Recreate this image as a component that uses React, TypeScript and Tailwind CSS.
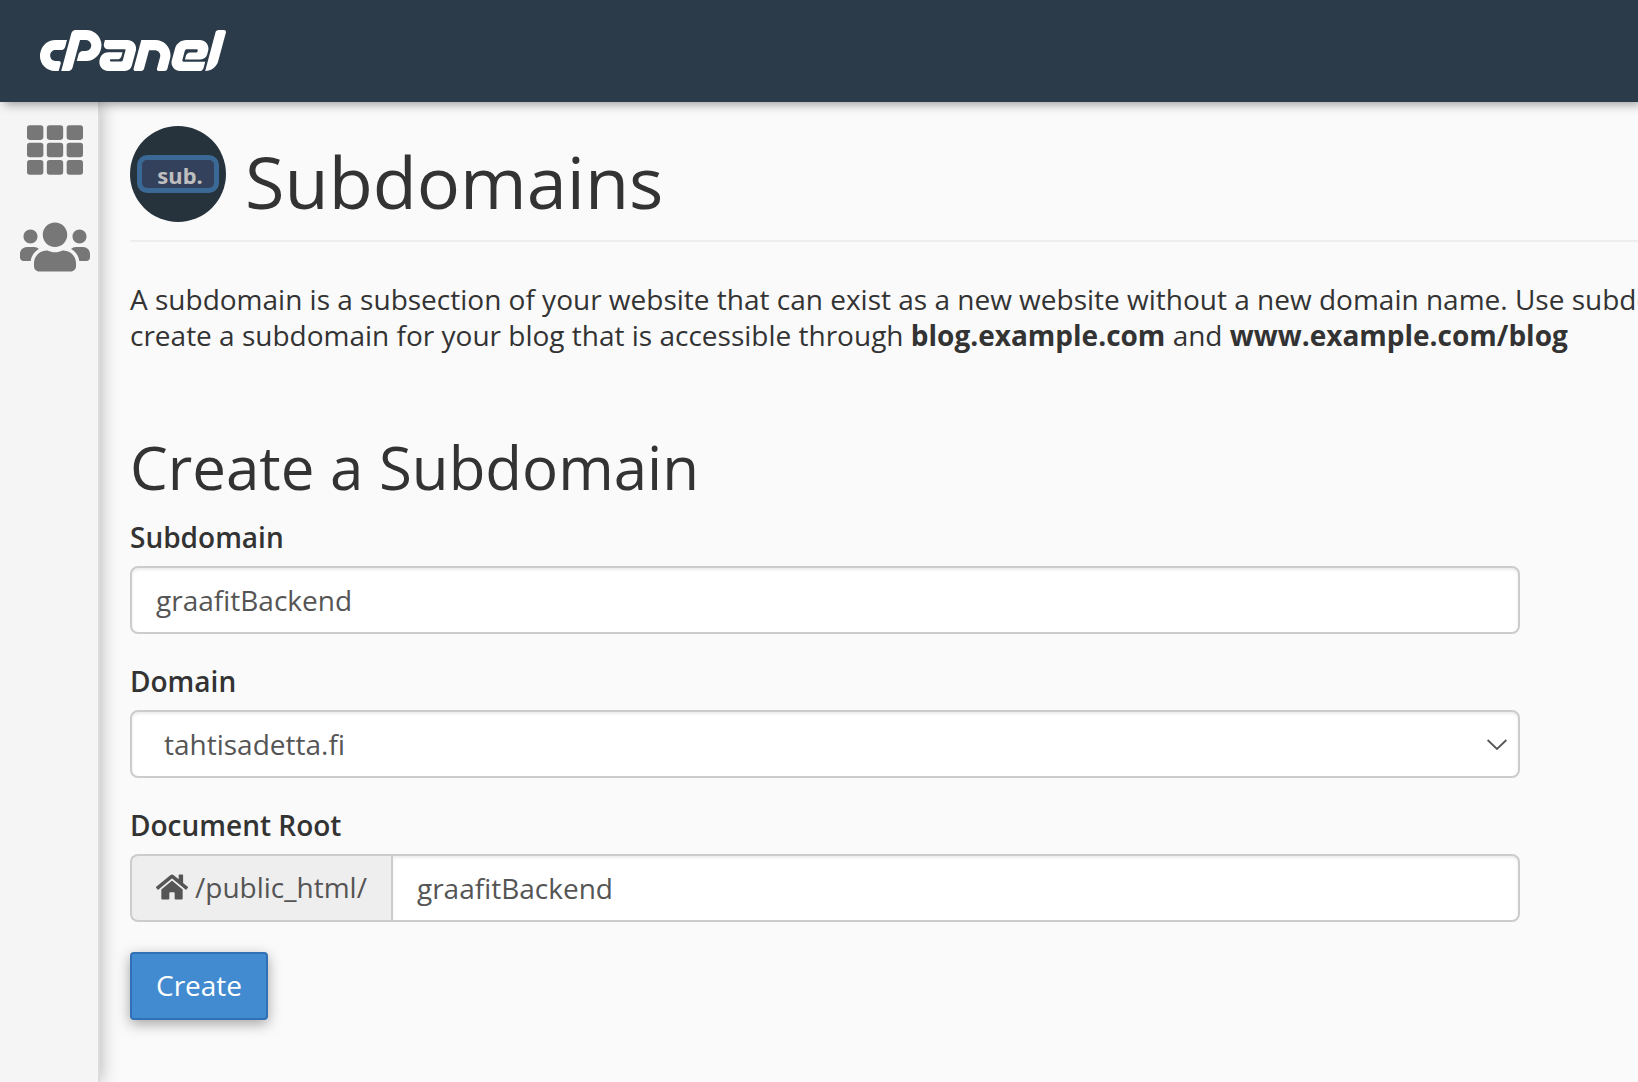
import { FaCpanel, FaHome, FaUsers } from "react-icons/fa";

const gridColumns = [0, 20, 40];
const gridRows = [0, 17.6, 35.2];

function AppsGrid() {
  return (
    <svg viewBox="0 0 56.5 50" className="h-[50px] w-14" fill="currentColor" aria-hidden="true">
      {gridRows.map((y) =>
        gridColumns.map((x) => <rect key={`${x}-${y}`} x={x} y={y} width="16.5" height="14.8" rx="2.8" />)
      )}
    </svg>
  );
}

function SubdomainBadge() {
  return (
    <div className="flex size-24 shrink-0 items-center justify-center rounded-full bg-[#26323c]">
      <div className="flex h-[38px] w-[82px] items-center justify-center rounded-[10px] border-[5px] border-[#3b6996] bg-[#33415c] pt-0.5 pl-1 font-['Noto_Sans',sans-serif] text-[22px] leading-none font-bold text-[#bfbfbf]">
        sub.
      </div>
    </div>
  );
}

const labelClass = "mb-[11px] block text-[28px] leading-[35px] font-semibold";
const fieldClass =
  "h-[68px] w-full rounded-lg border-2 border-[#cccccc] bg-white px-6 text-[28px] text-[#555555] shadow-[inset_0_2px_3px_rgba(0,0,0,0.08)] outline-none";

export default function App() {
  return (
    <div className="flex min-h-screen flex-col overflow-hidden bg-[#fafafa] font-['Open_Sans',sans-serif] text-[#333333]">
      <header className="relative z-20 flex h-[102px] items-center bg-[#2c3b4a] pb-0.5 pl-[39px] text-white shadow-[4px_2px_10px_rgba(0,0,0,0.4)]">
        <a href="#" aria-label="cPanel">
          <FaCpanel viewBox="0 179 640 141" className="h-[41px] w-[188px]" />
        </a>
      </header>

      <div className="flex flex-1">
        <nav className="relative z-10 flex w-[98px] shrink-0 flex-col items-center gap-[47px] bg-[#f5f5f5] pt-[23px] pl-3 text-[#777777] shadow-[2px_0_0_#dcdcdc,4px_0_16px_rgba(0,0,0,0.25)]">
          <a href="#" aria-label="Home">
            <AppsGrid />
          </a>
          <a href="#" aria-label="User manager">
            <FaUsers viewBox="0 32 640 448" className="h-[50px] w-[70px]" />
          </a>
        </nav>

        <main className="min-w-0 flex-1 pt-6 pl-8">
          <div className="flex h-[116px] gap-[19px] border-b-2 border-[#eeeeee]">
            <SubdomainBadge />
            <h1 className="pt-[7px] text-[72px] leading-[96px]">Subdomains</h1>
          </div>

          <p className="mt-[39px] text-[28px] leading-9 whitespace-nowrap">
            A subdomain is a subsection of your website that can exist as a new website without a new domain name. Use
            subdomains to
            <br />
            create a subdomain for your blog that is accessible through <b>blog.example.com</b> and{" "}
            <b>www.example.com/blog</b>
          </p>

          <form className="mt-[78px] mr-[118px]" onSubmit={(e) => e.preventDefault()}>
            <h2 className="text-[60px] leading-[72px]">Create a Subdomain</h2>

            <div className="mt-[17px] mb-[30px]">
              <label htmlFor="subdomain" className={labelClass}>
                Subdomain
              </label>
              <input id="subdomain" type="text" defaultValue="graafitBackend" className={fieldClass} />
            </div>

            <div className="mb-[30px]">
              <label htmlFor="domain" className={labelClass}>
                Domain
              </label>
              <div className="relative">
                <select id="domain" className={`${fieldClass} appearance-none pl-8`}>
                  <option>tahtisadetta.fi</option>
                </select>
                <svg
                  viewBox="0 0 20 11"
                  className="pointer-events-none absolute top-[29px] right-[13px] h-[11px] w-5"
                  fill="none"
                  stroke="#555555"
                  strokeWidth="1.8"
                  aria-hidden="true"
                >
                  <path d="M0.6 1 L10 10 L19.4 1" />
                </svg>
              </div>
            </div>

            <div className="mb-[30px]">
              <label htmlFor="root" className={labelClass}>
                Document Root
              </label>
              <div className="flex">
                <span className="flex h-[68px] shrink-0 items-center gap-[7px] rounded-l-lg border-2 border-r-0 border-[#cccccc] bg-[#eeeeee] px-6 pb-0.5 text-[28px] text-[#555555]">
                  <FaHome className="size-8" />
                  /public_html/
                </span>
                <input id="root" type="text" defaultValue="graafitBackend" className={`${fieldClass} min-w-0 rounded-l-none`} />
              </div>
            </div>

            <button
              type="submit"
              className="h-[68px] rounded-sm border-2 border-[#3071b5] bg-[#428bd0] px-6 pb-0.5 text-[28px] text-white shadow-[0_4px_14px_rgba(0,0,0,0.35)]"
            >
              Create
            </button>
          </form>
        </main>
      </div>
    </div>
  );
}
